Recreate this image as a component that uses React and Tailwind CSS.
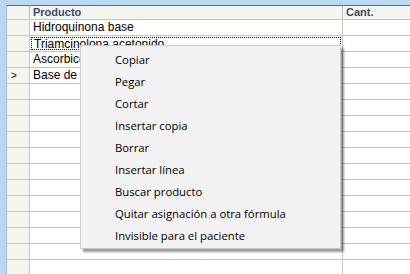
import React from 'react';

const rows = [
    { name: 'Hidroquinona base' },
    { name: 'Triamcinolona acetonido', focused: true },
    { name: 'Ascorbico' },
    { name: 'Base de beta', current: true },
];

const menuItems = [
    'Copiar',
    'Pegar',
    'Cortar',
    'Insertar copia',
    'Borrar',
    'Insertar línea',
    'Buscar producto',
    'Quitar asignación a otra fórmula',
    'Invisible para el paciente',
];

export default function App() {
    const filled = [...rows, ...Array.from({ length: 12 }, () => ({ name: '' }))];

    return (
        <div className="relative w-[410px] h-[274px] overflow-hidden bg-[#b9d7f1] pt-[5px] pl-[6px] font-['Liberation_Sans',sans-serif] text-[12px] text-black">
            <div className="h-full bg-white border-t border-l border-t-[#6d6d6d] border-l-[#a7bccf]">
                {/* cabecera */}
                <div className="flex h-[14px] border-b border-[#c4c4c4] bg-[#f5f5f0] font-bold text-[11px] text-[#3f4a62]">
                    <div className="w-[23px] shrink-0 border-r border-[#c4c4c4]"></div>
                    <div className="w-[313px] shrink-0 border-r border-[#c4c4c4] pl-[3px] leading-[13px]">
                        Producto
                    </div>
                    <div className="flex-1 pl-[3px] leading-[13px]">
                        Cant.
                    </div>
                </div>

                {filled.map((r, i) => (
                    <div key={i} className="flex h-[16px] border-b border-[#c4c4c4]">
                        <div className="w-[23px] shrink-0 border-r border-[#c4c4c4] bg-[#f5f5f0] pl-[4px] leading-[15px] text-[10px]">
                            {r.current ? '>' : ''}
                        </div>
                        <div className="w-[313px] shrink-0 border-r border-[#c4c4c4] p-[1px]">
                            <div className={`h-full pl-[2px] leading-[13px] whitespace-nowrap overflow-hidden ${r.focused ? 'border border-dotted border-black pl-[1px] leading-[11px]' : ''}`}>
                                {r.name}
                            </div>
                        </div>
                        <div className="flex-1"></div>
                    </div>
                ))}
            </div>

            {/* menú contextual */}
            <div className="absolute left-[80px] top-[45px] w-[261px] bg-[#f2f2f2] border border-[#cccccc] pt-[3px] pb-[1px] shadow-[3px_3px_2px_rgba(0,0,0,0.4)] font-['Open_Sans',sans-serif] text-[11.3px]">
                {menuItems.map((item) => (
                    <div key={item} className="h-[22px] pl-[34px] leading-[22px] whitespace-nowrap">
                        {item}
                    </div>
                ))}
            </div>
        </div>
    );
}
